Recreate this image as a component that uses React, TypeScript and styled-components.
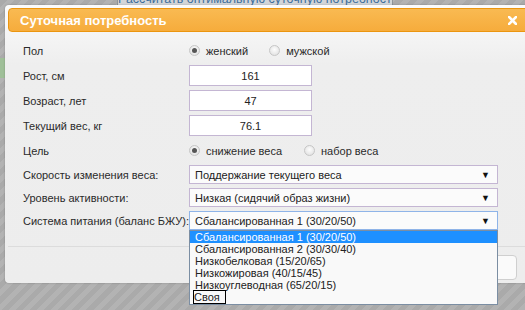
import React from 'react';
import styled, { createGlobalStyle } from 'styled-components';

const GlobalStyle = createGlobalStyle`
  html, body {
    margin: 0;
    padding: 0;
    overflow: hidden;
  }
  body {
    font-family: "Liberation Sans", Arial, sans-serif;
    font-size: 11px;
    color: #222;
  }
`;

const Backdrop = styled.div`
  position: relative;
  width: 525px;
  height: 310px;
  overflow: hidden;
  background: repeating-linear-gradient(135deg, #aaaaaa 0px, #aaaaaa 5px, #b3b3b3 5px, #b3b3b3 10px);
`;

// page content behind the overlay
const BehindButton = styled.div`
  margin-left: 117px;
  width: 274px;
  height: 6px;
  overflow: hidden;
  background: #d3d6d9;
  border-left: 1px solid #8e9499;
  border-right: 1px solid #8e9499;
  color: #3d6e9c;
  font-size: 12.5px;
  line-height: 13px;
  white-space: nowrap;
  text-align: center;
`;

const BehindText = styled.div`
  margin-top: -7px;
`;

const LeftStub = styled.div`
  margin-top: 52px;
  width: 5px;
  height: 20px;
  background: #9fbf98;
`;

const Dialog = styled.div`
  position: absolute;
  left: 5px;
  top: 5px;
  width: 530px;
  height: 278px;
  box-sizing: border-box;
  padding: 3px;
  border-radius: 4px;
  background: linear-gradient(#fbfbfb, #eeeeee 60px, #ededed);
  box-shadow: 0 0 2px rgba(0, 0, 0, 0.25);
  display: flex;
  flex-direction: column;
`;

const TitleBar = styled.div`
  flex-shrink: 0;
  height: 24px;
  box-sizing: border-box;
  border: 1px solid #eb950f;
  border-radius: 4px;
  background: linear-gradient(#f9ba52, #f6ac3c);
  display: flex;
  align-items: center;
  justify-content: space-between;
  padding: 0 14px 0 11px;
`;

const Title = styled.span`
  color: #fff;
  font-weight: bold;
  font-size: 13px;
`;

const Close = styled.svg`
  width: 9px;
  height: 9px;
  display: block;
`;

const Form = styled.div`
  flex-shrink: 0;
  display: grid;
  grid-template-columns: 166px 309px;
  row-gap: 4px;
  align-items: center;
  padding: 8px 0 0 15px;
`;

const Label = styled.div`
  color: #2a2a2a;
  white-space: nowrap;
`;

const RadioGroup = styled.div`
  height: 21px;
  display: flex;
  align-items: center;
`;

const RadioOption = styled.label<{ $gap: number }>`
  display: flex;
  align-items: center;
  margin-right: ${(p) => p.$gap}px;
  color: #2a2a2a;
`;

const RadioDot = styled.span<{ $checked?: boolean }>`
  width: 11px;
  height: 11px;
  box-sizing: border-box;
  border-radius: 50%;
  border: 1px solid #c6c6c6;
  background: radial-gradient(circle at 50% 40%, #fdfdfd, #dcdcdc);
  margin-right: 6px;
  display: flex;
  align-items: center;
  justify-content: center;
  &::after {
    content: '';
    display: ${(p) => (p.$checked ? 'block' : 'none')};
    width: 5px;
    height: 5px;
    border-radius: 50%;
    background: #555;
  }
`;

const NumberBox = styled.div`
  width: 123px;
  height: 21px;
  box-sizing: border-box;
  border: 1px solid #c4b6d3;
  background: #fff;
  display: flex;
  align-items: center;
  justify-content: center;
  color: #222;
`;

const SelectWrap = styled.div`
  position: relative;
`;

const SelectBox = styled.div<{ $focused?: boolean }>`
  width: 309px;
  height: 19px;
  box-sizing: border-box;
  border: 1px solid ${(p) => (p.$focused ? '#8fb4e8' : '#c4b6d3')};
  background: #fbfbfb;
  display: flex;
  align-items: center;
  justify-content: space-between;
  padding: 0 7px 0 5px;
  color: #222;
`;

const Arrow = styled.span`
  font-size: 9px;
  color: #111;
`;

const OptionList = styled.div`
  position: absolute;
  left: 0;
  top: 100%;
  width: 309px;
  box-sizing: border-box;
  border: 1px solid #7b8ea3;
  background: #f9f9f9;
  padding-bottom: 1px;
  z-index: 2;
`;

const Option = styled.div<{ $selected?: boolean; $outlined?: boolean }>`
  height: 12px;
  line-height: 12px;
  padding-left: 5px;
  white-space: nowrap;
  color: ${(p) => (p.$selected ? '#fff' : '#222')};
  background: ${(p) => (p.$selected ? '#1e90ff' : 'transparent')};
  span {
    outline: ${(p) => (p.$outlined ? '1px solid #000' : 'none')};
    padding: 0 ${(p) => (p.$outlined ? '5px' : '0')} 0 0;
    margin-left: ${(p) => (p.$outlined ? '-1px' : '0')};
  }
`;

const Separator = styled.div`
  flex-shrink: 0;
  margin-top: 16px;
  border-top: 1px solid #dcdcdc;
`;

const ButtonPane = styled.div`
  display: flex;
  justify-content: flex-end;
  padding: 8px 15px 0 0;
`;

const Button = styled.div`
  width: 110px;
  height: 25px;
  box-sizing: border-box;
  border: 1px solid #cfcfcf;
  border-radius: 4px;
  background: #fafafa;
  color: #2f8fd8;
  display: flex;
  align-items: center;
  justify-content: center;
`;

const diets = [
  'Сбалансированная 1 (30/20/50)',
  'Сбалансированная 2 (30/30/40)',
  'Низкобелковая (15/20/65)',
  'Низкожировая (40/15/45)',
  'Низкоуглеводная (65/20/15)',
  'Своя',
];

const App: React.FC = () => {
  return (
    <>
      <GlobalStyle />
      <Backdrop>
        <BehindButton>
          <BehindText>Рассчитать оптимальную суточную потребность</BehindText>
        </BehindButton>
        <LeftStub />
        <Dialog>
          <TitleBar>
            <Title>Суточная потребность</Title>
            <Close viewBox="0 0 9 9">
              <path d="M1 1 L8 8 M8 1 L1 8" stroke="#fff" strokeWidth="2.6" strokeLinecap="square" />
            </Close>
          </TitleBar>
          <Form>
            <Label>Пол</Label>
            <RadioGroup>
              <RadioOption $gap={21}>
                <RadioDot $checked />
                женский
              </RadioOption>
              <RadioOption $gap={0}>
                <RadioDot />
                мужской
              </RadioOption>
            </RadioGroup>

            <Label>Рост, см</Label>
            <NumberBox>161</NumberBox>

            <Label>Возраст, лет</Label>
            <NumberBox>47</NumberBox>

            <Label>Текущий вес, кг</Label>
            <NumberBox>76.1</NumberBox>

            <Label>Цель</Label>
            <RadioGroup>
              <RadioOption $gap={22}>
                <RadioDot $checked />
                снижение веса
              </RadioOption>
              <RadioOption $gap={0}>
                <RadioDot />
                набор веса
              </RadioOption>
            </RadioGroup>

            <Label>Скорость изменения веса:</Label>
            <SelectBox>
              Поддержание текущего веса
              <Arrow>▼</Arrow>
            </SelectBox>

            <Label>Уровень активности:</Label>
            <SelectBox>
              Низкая (сидячий образ жизни)
              <Arrow>▼</Arrow>
            </SelectBox>

            <Label>Система питания (баланс БЖУ):</Label>
            <SelectWrap>
              <SelectBox $focused>
                Сбалансированная 1 (30/20/50)
                <Arrow>▼</Arrow>
              </SelectBox>
              <OptionList>
                {diets.map((d, i) => (
                  <Option key={d} $selected={i === 0} $outlined={i === diets.length - 1}>
                    <span>{d}</span>
                  </Option>
                ))}
              </OptionList>
            </SelectWrap>
          </Form>
          <Separator />
          <ButtonPane>
            <Button>Рассчитать</Button>
          </ButtonPane>
        </Dialog>
      </Backdrop>
    </>
  );
};

export default App;
